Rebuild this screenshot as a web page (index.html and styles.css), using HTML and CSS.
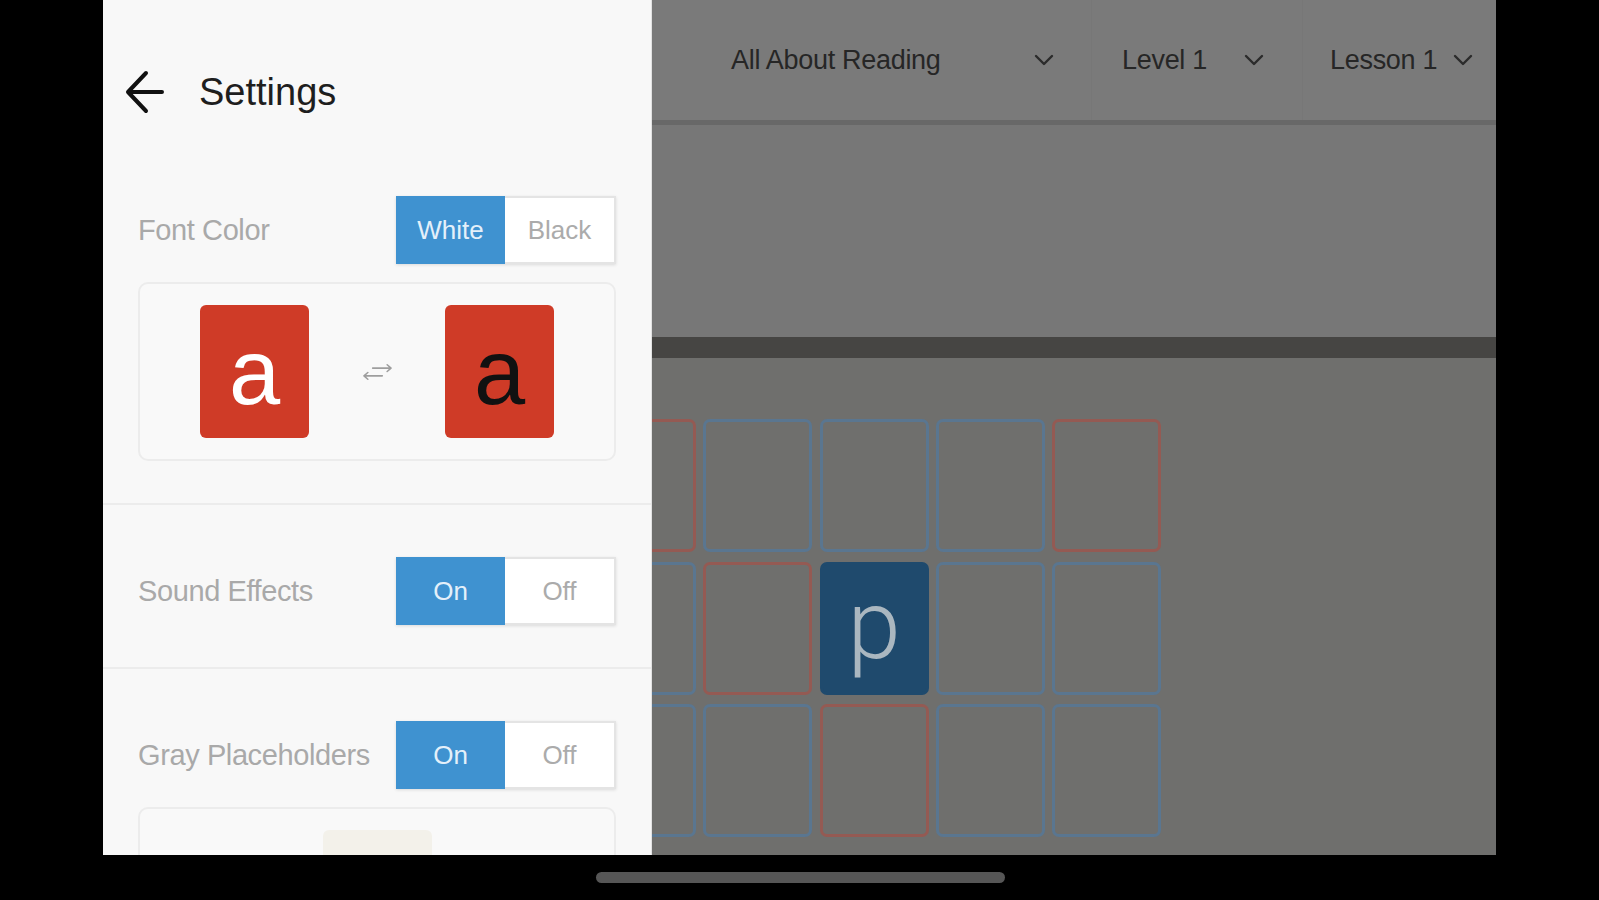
FILE: index.html
```html
<!DOCTYPE html>
<html lang="en">
<head>
<meta charset="utf-8">
<title>Settings</title>
<link rel="stylesheet" href="styles.css">
</head>
<body>
<div class="device">
  <div class="screen">
    <div class="app">
      <header class="app-header">
        <div class="dd dd-program"><span>All About Reading</span><svg class="chev" viewBox="0 0 20 12"><path d="M2 2 L10 10 L18 2"/></svg></div>
        <div class="dd dd-level"><span>Level 1</span><svg class="chev" viewBox="0 0 20 12"><path d="M2 2 L10 10 L18 2"/></svg></div>
        <div class="dd dd-lesson"><span>Lesson 1</span><svg class="chev" viewBox="0 0 20 12"><path d="M2 2 L10 10 L18 2"/></svg></div>
      </header>
      <div class="app-banner"></div>
      <div class="app-divider"></div>
      <div class="board">
        <div class="tile-grid">
          <div class="tile red"></div>
          <div class="tile"></div>
          <div class="tile"></div>
          <div class="tile"></div>
          <div class="tile red"></div>

          <div class="tile"></div>
          <div class="tile red"></div>
          <div class="tile active">p</div>
          <div class="tile"></div>
          <div class="tile"></div>

          <div class="tile"></div>
          <div class="tile"></div>
          <div class="tile red"></div>
          <div class="tile"></div>
          <div class="tile"></div>
        </div>
      </div>
    </div>

    <aside class="drawer">
      <div class="drawer-header">
        <svg class="back" viewBox="0 0 40 46"><path d="M37 23 H4 M21 4 L3 23 L21 42"/></svg>
        <span class="drawer-title">Settings</span>
      </div>

      <section class="setting">
        <div class="setting-row">
          <span class="setting-label">Font Color</span>
          <div class="seg"><span class="seg-opt on">White</span><span class="seg-opt off">Black</span></div>
        </div>
        <div class="preview">
          <div class="letter-tile light">a</div>
          <svg class="swap" viewBox="0 0 30 20"><path d="M10 6 H29 M25 2.5 L29 6 L25 9.5 M20 14 H1 M5 10.5 L1 14 L5 17.5"/></svg>
          <div class="letter-tile dark">a</div>
        </div>
      </section>

      <section class="setting">
        <div class="setting-row">
          <span class="setting-label">Sound Effects</span>
          <div class="seg"><span class="seg-opt on">On</span><span class="seg-opt off">Off</span></div>
        </div>
      </section>

      <section class="setting">
        <div class="setting-row">
          <span class="setting-label">Gray Placeholders</span>
          <div class="seg"><span class="seg-opt on">On</span><span class="seg-opt off">Off</span></div>
        </div>
        <div class="preview">
          <div class="placeholder-tile"></div>
        </div>
      </section>
    </aside>
  </div>
  <div class="home-bar"></div>
</div>
</body>
</html>
```

FILE: styles.css
```css
* { box-sizing: border-box; }

body {
  margin: 0;
  width: 1599px;
  height: 900px;
  overflow: hidden;
  background: #000;
  font-family: "Liberation Sans", Arial, sans-serif;
}

.device {
  display: flex;
  flex-direction: column;
  align-items: flex-start;
  padding-left: 103px;
}

.screen {
  position: relative;
  width: 1393px;
  height: 855px;
  overflow: hidden;
  background: #777;
}

.home-bar {
  width: 409px;
  height: 11px;
  margin: 17px 0 0 493px;
  border-radius: 6px;
  background: #565656;
}

/* ---------- underlying app (dimmed) ---------- */
.app {
  display: flex;
  flex-direction: column;
  height: 100%;
}

.app-header {
  flex: none;
  height: 125px;
  display: flex;
  justify-content: flex-end;
  background: #7a7a7a;
  border-bottom: 5px solid #686868;
}

.dd {
  display: flex;
  align-items: center;
  justify-content: space-between;
  font-size: 27px;
  color: #262626;
  letter-spacing: -0.3px;
}

.dd-program { width: 391px; padding: 0 37px 0 31px; }
.dd-level { width: 211px; padding: 0 38px 0 30px; border-left: 1px solid #777; }
.dd-lesson { width: 194px; padding: 0 23px 0 27px; border-left: 1px solid #777; }

.chev {
  width: 20px;
  height: 12px;
  fill: none;
  stroke: #2b2b2b;
  stroke-width: 2.4;
  stroke-linecap: round;
  stroke-linejoin: round;
}

.app-banner {
  flex: none;
  height: 212px;
  background: #777;
}

.app-divider {
  flex: none;
  height: 21px;
  background: #464543;
}

.board {
  flex: 1;
  background: #6f6f6d;
  padding: 61px 0 0 484px;
}

.tile-grid {
  display: grid;
  grid-template-columns: repeat(5, 109px);
  grid-auto-rows: 133px;
  column-gap: 7.3px;
  row-gap: 9.5px;
}

.tile {
  border: 3px solid #5a7690;
  border-radius: 7px;
}

.tile.red { border-color: #945a53; }

.tile.active {
  display: flex;
  align-items: center;
  justify-content: center;
  background: #1f4a6d;
  border-color: #1f4a6d;
  color: #aab7c0;
  font-family: Roboto, "Liberation Sans", sans-serif;
  font-weight: 300;
  font-size: 96px;
  line-height: 1;
  padding-bottom: 6px;
}

/* ---------- settings drawer ---------- */
.drawer {
  position: absolute;
  left: 0;
  top: 0;
  bottom: 0;
  width: 549px;
  background: #f8f8f8;
  border-right: 1px solid #e2e2e2;
  overflow: hidden;
}

.drawer-header {
  display: flex;
  align-items: center;
  gap: 34px;
  height: 144px;
  padding: 69px 0 29px 22px;
}

.back {
  width: 40px;
  height: 46px;
  fill: none;
  stroke: #111;
  stroke-width: 4;
  stroke-linecap: round;
  stroke-linejoin: round;
}

.drawer-title {
  font-size: 38px;
  color: #1e1e1e;
}

.setting {
  padding: 52px 35px 42px;
  border-bottom: 2px solid #ececec;
}

.setting-row {
  display: flex;
  align-items: center;
  justify-content: space-between;
}

.setting-label {
  font-size: 29px;
  color: #a9a9a9;
  letter-spacing: -0.4px;
}

.seg {
  display: flex;
  width: 220px;
  height: 68px;
  box-shadow: 0 1px 3px rgba(0, 0, 0, 0.12);
}

.seg-opt {
  display: flex;
  align-items: center;
  justify-content: center;
  font-size: 26px;
}

.seg-opt.on {
  width: 109px;
  background: #3f92d0;
  color: #e4f0fa;
}

.seg-opt.off {
  flex: 1;
  background: #fff;
  color: #ababab;
  border: 2px solid #e4e4e4;
  border-left: none;
}

.preview {
  margin-top: 18px;
  height: 179px;
  display: flex;
  align-items: center;
  justify-content: center;
  gap: 53.5px;
  border: 2px solid #ececec;
  border-radius: 10px;
  background: #f9f9f9;
}

.letter-tile {
  width: 109px;
  height: 133px;
  display: flex;
  align-items: center;
  justify-content: center;
  border-radius: 6px;
  background: #cf3b27;
  font-size: 92px;
  line-height: 1;
}

.letter-tile.light { color: #fff; }
.letter-tile.dark { color: #111; }

.swap {
  width: 29px;
  height: 20px;
  fill: none;
  stroke: #9e9e9e;
  stroke-width: 1.6;
  stroke-linecap: round;
  stroke-linejoin: round;
}

.placeholder-tile {
  width: 109px;
  height: 133px;
  border-radius: 6px;
  background: #f3f1ea;
}
```
